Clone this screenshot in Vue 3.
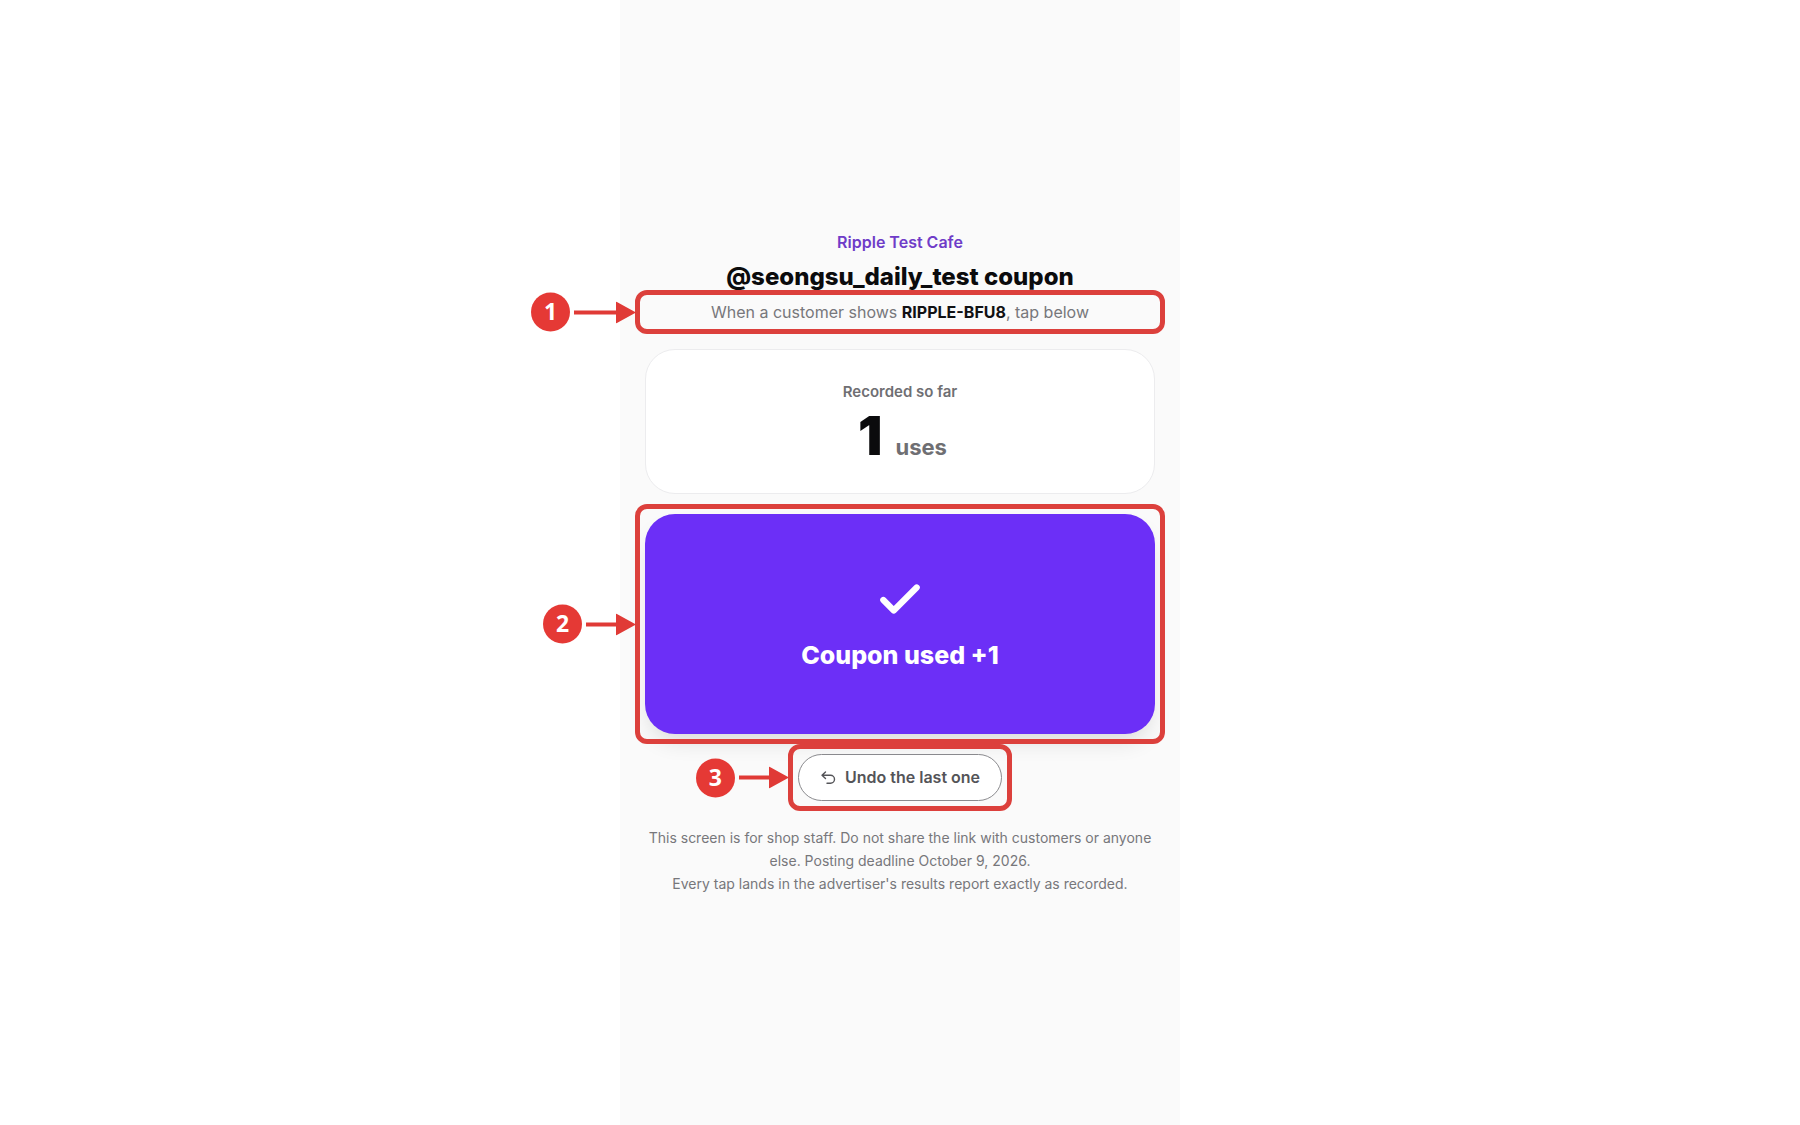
<script setup>
import { ref } from 'vue'

const uses = ref(1)
const record = () => { uses.value += 1 }
const undo = () => { uses.value = Math.max(0, uses.value - 1) }
</script>

<template>
  <main class="screen">
    <header class="intro">
      <p class="shop">Ripple Test Cafe</p>
      <h1 class="title">@seongsu_daily_test coupon</h1>
      <div class="step">
        <p class="hint">When a customer shows <strong>RIPPLE-BFU8</strong>, tap below</p>
        <span class="outline"></span>
        <span class="marker">
          <span class="badge">1</span>
          <svg class="arrow" width="62" height="22" viewBox="0 0 62 22"><path d="M0 9h42V0l20 11-20 11v-9H0z" /></svg>
        </span>
      </div>
    </header>

    <section class="count">
      <p class="count-label">Recorded so far</p>
      <p class="count-value"><span class="number">{{ uses }}</span><span class="unit">uses</span></p>
    </section>

    <div class="step">
      <button class="record" type="button" @click="record">
        <svg width="50" height="50" viewBox="0 0 24 24" fill="none" stroke="currentColor" stroke-width="3" stroke-linecap="round" stroke-linejoin="round"><path d="M20 6 9 17l-5-5" /></svg>
        Coupon used +1
      </button>
      <span class="outline"></span>
      <span class="marker">
        <span class="badge">2</span>
        <svg class="arrow" width="50" height="22" viewBox="0 0 50 22"><path d="M0 9h30V0l20 11-20 11v-9H0z" /></svg>
      </span>
    </div>

    <div class="step step-undo">
      <button class="undo" type="button" @click="undo">
        <svg width="16" height="16" viewBox="0 0 16 16" fill="none" stroke="currentColor" stroke-width="1.4" stroke-linecap="round" stroke-linejoin="round"><path d="M5.500 2 2 5.300l3.500 3.300M2 5.300h8.500a4 4 0 0 1 0 8H7" /></svg>
        Undo the last one
      </button>
      <span class="outline"></span>
      <span class="marker">
        <span class="badge">3</span>
        <svg class="arrow" width="50" height="22" viewBox="0 0 50 22"><path d="M0 9h30V0l20 11-20 11v-9H0z" /></svg>
      </span>
    </div>

    <footer class="note">
      <p>This screen is for shop staff. Do not share the link with customers or anyone else. Posting deadline October 9, 2026.</p>
      <p>Every tap lands in the advertiser's results report exactly as recorded.</p>
    </footer>
  </main>
</template>

<style>
body {
  margin: 0;
  background: #fff;
}
</style>

<style scoped>
.screen {
  box-sizing: border-box;
  display: flex;
  flex-direction: column;
  justify-content: center;
  gap: 20px;
  max-width: 560px;
  min-height: 100vh;
  margin: 0 auto;
  padding: 24px 25px;
  background: #fafafa;
  color: #0b0b0d;
  font-family: Inter, "Liberation Sans", sans-serif;
  text-align: center;
}
p,
h1 {
  margin: 0;
}
.intro {
  display: flex;
  flex-direction: column;
  gap: 8px;
  margin-bottom: 5px;
}
.shop {
  color: #6f3cc8;
  font-size: 16px;
  font-weight: 600;
  line-height: 24px;
}
.title {
  font-size: 24px;
  font-weight: 800;
  line-height: 30px;
}
.hint {
  color: #77777b;
  font-size: 16px;
  line-height: 24px;
}
.hint strong {
  color: #111113;
  font-weight: 700;
}
.count {
  display: flex;
  flex-direction: column;
  gap: 5px;
  padding: 31px 24px 29px;
  border: 1px solid #ececee;
  border-radius: 30px;
  background: #fff;
}
.count-label {
  color: #6f6f73;
  font-size: 15px;
  font-weight: 600;
  line-height: 22px;
}
.count-value {
  display: flex;
  justify-content: center;
  align-items: baseline;
  gap: 13px;
  padding-left: 5px;
}
.number {
  font-size: 54px;
  font-weight: 900;
  line-height: 56px;
}
.unit {
  color: #6f6f73;
  font-size: 22px;
  font-weight: 700;
  line-height: 24px;
}
.step {
  position: relative;
}
.step-undo {
  align-self: center;
}
.record {
  display: flex;
  flex-direction: column;
  align-items: center;
  justify-content: center;
  gap: 12px;
  width: 100%;
  height: 220px;
  padding: 0;
  border: 0;
  border-radius: 30px;
  background: #6c2ff7;
  box-shadow: 0 12px 24px -8px rgba(0, 0, 0, 0.16);
  color: #fff;
  font: 800 25px/36px Inter, "Liberation Sans", sans-serif;
}
.undo {
  display: flex;
  align-items: center;
  gap: 9px;
  padding: 11px 21px;
  border: 1px solid #8a8a8e;
  border-radius: 24px;
  background: #fff;
  color: #545458;
  font: 600 16px/23px Inter, "Liberation Sans", sans-serif;
}
.note {
  margin-top: 5px;
  color: #77777b;
  font-size: 14px;
  line-height: 23px;
}
.outline {
  position: absolute;
  inset: -10px;
  border: 5px solid #dc403c;
  border-radius: 12px;
  pointer-events: none;
}
.marker {
  position: absolute;
  top: 50%;
  right: 100%;
  display: flex;
  align-items: center;
  gap: 4px;
  margin-right: 9px;
  transform: translateY(-50%);
}
.badge {
  width: 39px;
  height: 39px;
  border-radius: 50%;
  background: #e53935;
  color: #fff;
  font: 700 23px/37px "Noto Sans", "Open Sans", sans-serif;
}
.arrow {
  display: block;
  fill: #e03a36;
}
</style>
